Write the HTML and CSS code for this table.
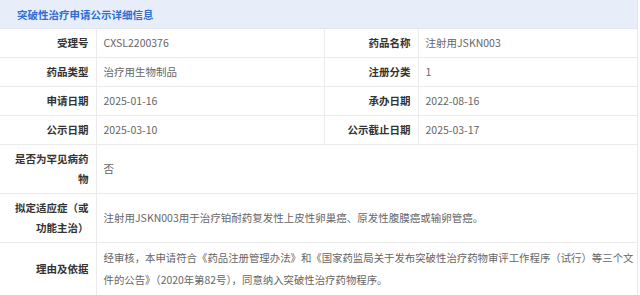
FILE: index.html
```html
<!DOCTYPE html>
<html lang="zh-CN">
<head>
<meta charset="utf-8">
<title>突破性治疗申请公示详细信息</title>
<link rel="stylesheet" href="styles.css">
</head>
<body>
<div class="panel">
  <div class="panel-head">突破性治疗申请公示详细信息</div>
  <table class="info">
    <colgroup>
      <col class="c-label1"><col class="c-val1"><col class="c-label2"><col class="c-val2">
    </colgroup>
    <tbody>
      <tr><th>受理号</th><td>CXSL2200376</td><th>药品名称</th><td>注射用JSKN003</td></tr>
      <tr><th>药品类型</th><td>治疗用生物制品</td><th>注册分类</th><td>1</td></tr>
      <tr><th>申请日期</th><td>2025-01-16</td><th>承办日期</th><td>2022-08-16</td></tr>
      <tr><th>公示日期</th><td>2025-03-10</td><th>公示截止日期</th><td>2025-03-17</td></tr>
      <tr><th>是否为罕见病药物</th><td colspan="3">否</td></tr>
      <tr><th>拟定适应症（或功能主治）</th><td colspan="3">注射用JSKN003用于治疗铂耐药复发性上皮性卵巢癌、原发性腹膜癌或输卵管癌。</td></tr>
      <tr class="tall"><th>理由及依据</th><td colspan="3">经审核，本申请符合《药品注册管理办法》和《国家药监局关于发布突破性治疗药物审评工作程序（试行）等三个文件的公告》（2020年第82号），同意纳入突破性治疗药物程序。</td></tr>
    </tbody>
  </table>
</div>
</body>
</html>
```

FILE: styles.css
```css
html, body {
  margin: 0;
  padding: 0;
  background: #ffffff;
}
body {
  font-family: "Noto Sans CJK SC", "Noto Sans", sans-serif;
  font-size: 10.5px;
}
.panel {
  width: 638px;
  border-right: 1px solid #e6e6e6;
  border-bottom: 1px solid #ececec;
  box-sizing: border-box;
}
.panel-head {
  height: 29px;
  line-height: 29px;
  padding-left: 17px;
  background: #e8eef9;
  color: #2d6fd2;
  font-weight: bold;
  font-size: 10.5px;
  border-bottom: 1px solid #e3e8f0;
  box-sizing: border-box;
}
.info {
  width: 100%;
  border-collapse: collapse;
  table-layout: fixed;
}
.c-label1 { width: 96px; }
.c-val1 { width: 228px; }
.c-label2 { width: 94px; }
.info th, .info td {
  border: 1px solid #ebebeb;
  padding: 4px 7px 4px 7px;
  line-height: 20px;
  vertical-align: middle;
}
.info td { padding-right: 1px; }
.info tr:first-child th, .info tr:first-child td { border-top: 0; }
.info th:first-child { border-left: 0; }
.info td:last-child { border-right: 0; }
.info th {
  text-align: right;
  font-weight: bold;
  color: #333333;
}
.info td {
  text-align: left;
  color: #666666;
  font-weight: normal;
}
.info tr.tall td { line-height: 22px; font-size: 10.4px; }
```
